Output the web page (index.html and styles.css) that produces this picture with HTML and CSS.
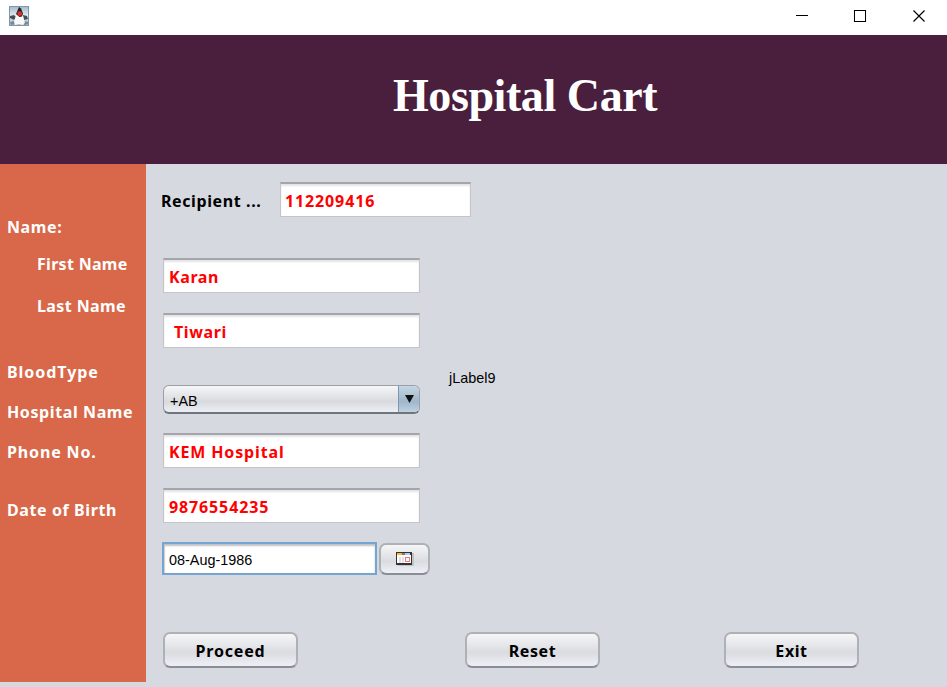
FILE: index.html
```html
<!DOCTYPE html>
<html lang="en">
<head>
<meta charset="utf-8">
<title>Hospital Cart</title>
<link rel="stylesheet" href="styles.css">
</head>
<body>
<div class="titlebar">
  <svg class="app-icon" width="20" height="20" viewBox="0 0 20 20">
    <defs><linearGradient id="sky" x1="0" y1="0" x2="0" y2="1"><stop offset="0" stop-color="#a3b9cc"/><stop offset=".5" stop-color="#e6edf3"/><stop offset="1" stop-color="#9eb2c4"/></linearGradient></defs>
    <rect x=".5" y=".5" width="19" height="19" fill="url(#sky)" stroke="#7d97ad"/>
    <path d="M1 10l4-1 2 2-2 3-4-2zM14 9l4 1 1 3-4 1z" fill="#454d55"/>
    <path d="M1 16l4-1 1 3-4 1zM15 15l4 1v2l-4 1z" fill="#7b8894"/>
    <path d="M7 9.500h6.500l2.500 7-2 2.500-4-1-4 1-1-3z" fill="#f8f8f8"/>
    <path d="M10 1l2 1.500 2 5-1 3-2.500.5L7 8z" fill="#202427"/>
    <circle cx="10.700" cy="7.700" r="2.400" fill="#e02c2b"/>
  </svg>
  <svg class="controls" width="151" height="35" viewBox="0 0 151 35" fill="none" stroke="#000">
    <path d="M16 15.500h12M74.500 10.500h11v11h-11z" shape-rendering="crispEdges"/>
    <path d="M133.500 10.500l11 11M144.500 10.500l-11 11" stroke-width="1.150"/>
  </svg>
</div>
<header class="header"><h1>Hospital Cart</h1></header>
<div class="body">
  <aside class="sidebar">
    <div class="label name">Name:</div>
    <div class="label first">First Name</div>
    <div class="label last">Last Name</div>
    <div class="label blood">BloodType</div>
    <div class="label hospital">Hospital Name</div>
    <div class="label phone">Phone No.</div>
    <div class="label birth">Date of Birth</div>
  </aside>
  <main class="main">
    <div class="row recipient"><span class="caption">Recipient ...</span><div class="field id">112209416</div></div>
    <div class="field given">Karan</div>
    <div class="field surname">Tiwari</div>
    <div class="row type-row">
      <div class="combo"><span>+AB</span><div class="arrow"><svg width="9" height="8" viewBox="0 0 9 8"><path d="M0 0h9L4.500 8z" fill="#111"/></svg></div></div>
      <span class="plain">jLabel9</span>
    </div>
    <div class="field clinic">KEM Hospital</div>
    <div class="field phone-field">9876554235</div>
    <div class="row date-row">
      <div class="date">08-Aug-1986</div>
      <div class="button picker"><svg width="18" height="14" viewBox="0 0 18 14" shape-rendering="crispEdges">
        <path d="M2 1h16v13H2z" fill="#c3c3c6"/><path d="M0 0h16v13H0z" fill="#333"/>
        <path d="M1 3h14v8H1z" fill="#fff"/><path d="M1 1h5v2H1z" fill="#ffb52e"/><path d="M6 1h3v2H6z" fill="#727980"/><path d="M9 1h5v2H9z" fill="#a9d0fc"/>
        <path d="M3 5h2v6H3zM6 5h2v6H6z" fill="#e2e2e4"/><path d="M9 5h5v5H9z" fill="#f0777b"/><path d="M10 6h3v3h-3z" fill="#fff"/>
      </svg></div>
    </div>
    <div class="row actions"><div class="button proceed">Proceed</div><div class="button reset">Reset</div><div class="button exit">Exit</div></div>
  </main>
</div>
</body>
</html>
```
FILE: styles.css
```css
* { box-sizing: border-box; }
body { margin: 0; width: 947px; height: 687px; overflow: hidden; background: #d6d9e0; font-family: "Noto Sans", sans-serif; font-size: 16px; }
.titlebar { height: 35px; background: #fff; display: flex; justify-content: space-between; padding-right: 16px; }
.app-icon { margin: 6px 0 0 9px; }
.header { height: 129px; background: #4a1f3d; padding-left: 393px; }
h1 { margin: 0; padding-top: 34px; font: bold 46px/54px "Liberation Serif", serif; color: #fff; white-space: nowrap; letter-spacing: -.42px; }
.body { display: flex; align-items: flex-start; }
.sidebar { width: 146px; height: 518px; background: #d86849; padding: 52px 0 0 7px; color: #fff; }
.label, .caption, .field, .button { font-weight: 700; letter-spacing: .6px; line-height: 22px; white-space: nowrap; }
.label.first { margin: 15px 0 0 30px; letter-spacing: .3px; }
.label.last { margin: 20px 0 0 30px; letter-spacing: .4px; }
.label.blood { margin-top: 44px; letter-spacing: .95px; }
.hospital, .phone { margin-top: 18px; }
.label.phone { letter-spacing: .85px; }
.birth { margin-top: 36px; }
.main { flex: 1; padding: 18px 0 0 17px; }
.row { display: flex; }
.recipient { align-items: center; margin: 0 0 41px -2px; }
.caption { width: 119px; color: #000; padding-top: 3px; }
.field { width: 257px; height: 35px; padding: 6px 0 0 5px; color: #f00; background: #fff; border: 1px solid #c3c5c9; border-top: 2px solid #a4a5aa; box-shadow: inset 0 2px 2px #e4e4e7; }
.field.id, .field.phone-field { letter-spacing: .87px; }
.field.clinic { letter-spacing: .85px; }
.id { width: 191px; padding-left: 4px; }
.surname { margin-top: 20px; padding-left: 10px; }
.type-row { height: 29px; margin: 37px 0 19px; }
.combo { width: 257px; height: 29px; display: flex; justify-content: space-between; border: 1px solid #9b9fa6; border-bottom: 2px solid #70757d; border-radius: 6px; overflow: hidden; background: linear-gradient(#f5f6f8, #d8dade 60%, #eceff5); font: 14.4px/30px "Liberation Sans", sans-serif; padding-left: 6px; }
.arrow { width: 21px; border-left: 1px solid #7c96ad; background: linear-gradient(#c5d6e4, #9fb7ca 60%, #bdd2e2); display: flex; padding: 9px 0 0 6px; }
.plain { font: 14.4px/20px "Liberation Sans", sans-serif; margin: -17px 0 0 29px; }
.phone-field { margin-top: 20px; }
.date-row { margin: 19px 0 0 -1px; }
.date { width: 215px; height: 33px; background: #fff; border: 2px solid #76a5d1; box-shadow: inset 0 2px 2px #bec0c5, inset 1px 0 1px #d0d4d8; font: 14.4px/32px "Liberation Sans", sans-serif; padding-left: 5px; }
.button { height: 36px; width: 135px; text-align: center; line-height: 34px; border: 2px solid #aeb1b6; border-bottom-color: #8a8e94; border-radius: 7px; background: linear-gradient(#f6f6f8, #dadce0 58%, #edf0f7); }
.proceed { letter-spacing: .8px; }
.picker { width: 51px; height: 32px; margin: 1px 0 0 2px; display: flex; padding: 7px 0 0 15px; }
.actions { margin-top: 57px; }
.reset { margin-left: 167px; }
.exit { margin-left: 124px; }
```
